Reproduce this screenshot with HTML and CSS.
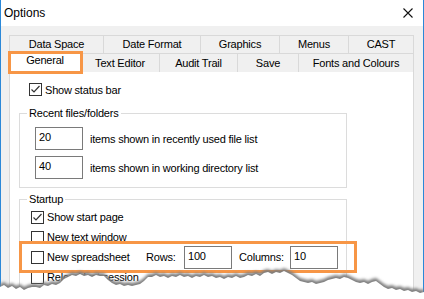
FILE: index.html
```html
<!DOCTYPE html>
<html lang="en">
<head>
    <meta charset="UTF-8">
    <meta name="viewport" content="width=device-width, initial-scale=1.0">
    <title>Options</title>
    <link rel="stylesheet" href="styles.css">
</head>
<body>
    <div class="window">
        <div class="titlebar">
            <span class="title">Options</span>
            <svg class="close" width="10" height="10" viewBox="0 0 10 10">
                <path d="M0.5 0.5L9.5 9.5M9.5 0.5L0.5 9.5" stroke="#111" stroke-width="1.1" fill="none"/>
            </svg>
        </div>
        <div class="dialog">
            <div class="tab-row back">
                <div class="tab">Data Space</div>
                <div class="tab">Date Format</div>
                <div class="tab">Graphics</div>
                <div class="tab">Menus</div>
                <div class="tab">CAST</div>
            </div>
            <div class="tab-row front">
                <div class="tab selected marked">General</div>
                <div class="tab">Text Editor</div>
                <div class="tab">Audit Trail</div>
                <div class="tab">Save</div>
                <div class="tab">Fonts and Colours</div>
            </div>
            <div class="panel">
                <div class="status-row">
                    <span class="box checked"><svg width="11" height="11" viewBox="0 0 11 11"><path d="M1.5 5.5L4 8L9.5 2" stroke="#333" stroke-width="1.2" fill="none"/></svg></span>
                    <span>Show status bar</span>
                </div>

                <fieldset class="group recent">
                    <legend>Recent files/folders</legend>
                    <div class="num-row">
                        <span class="field">20</span>
                        <span>items shown in recently used file list</span>
                    </div>
                    <div class="num-row">
                        <span class="field">40</span>
                        <span>items shown in working directory list</span>
                    </div>
                </fieldset>

                <fieldset class="group startup">
                    <legend>Startup</legend>
                    <div class="check-row">
                        <span class="box checked"><svg width="11" height="11" viewBox="0 0 11 11"><path d="M1.5 5.5L4 8L9.5 2" stroke="#333" stroke-width="1.2" fill="none"/></svg></span>
                        <span>Show start page</span>
                    </div>
                    <div class="check-row">
                        <span class="box"></span>
                        <span>New text window</span>
                    </div>
                    <div class="check-row marked">
                        <div class="check-label">
                            <span class="box"></span>
                            <span>New spreadsheet</span>
                        </div>
                        <span class="rows-label">Rows:</span>
                        <span class="field">100</span>
                        <span class="cols-label">Columns:</span>
                        <span class="field">10</span>
                    </div>
                    <div class="check-row">
                        <span class="box"></span>
                        <span>Reload last session</span>
                    </div>
                </fieldset>
            </div>
        </div>
    </div>

    <svg class="tear" width="424" height="299" viewBox="0 0 424 299">
        <defs>
            <filter id="soft" x="-5%" y="-20%" width="110%" height="140%">
                <feGaussianBlur stdDeviation="1.4"/>
            </filter>
            <path id="edge" d="M0 287 L4 285 L8 288 L12 286 L16 289 L20 287 L24 290 L28 288 L32 287 L36 287 L40 288 L44 285 L48 286 L52 284 L56 285 L60 283 L64 279 L68 277 L72 275 L76 276 L80 274 L84 276 L88 275 L92 277 L96 275 L100 276 L104 276 L108 280 L112 283 L116 285 L120 284 L124 286 L128 285 L132 286 L136 285 L140 284 L144 281 L148 277 L152 277 L156 275 L160 277 L164 276 L168 278 L172 276 L176 277 L180 275 L184 277 L188 276 L192 278 L196 276 L200 277 L204 275 L208 277 L212 276 L216 278 L220 277 L224 279 L228 277 L232 278 L236 276 L240 278 L244 277 L248 275 L252 276 L256 274 L260 276 L264 273 L268 272 L272 274 L276 272 L280 273 L284 271 L288 273 L292 275 L296 278 L300 281 L304 282 L308 283 L312 282 L316 284 L320 283 L324 282 L328 280 L332 279 L336 278 L340 279 L344 277 L348 278 L352 280 L356 282 L360 283 L364 282 L368 284 L372 282 L376 281 L380 284 L384 287 L388 289 L392 288 L396 290 L400 289 L404 291 L408 290 L412 292 L416 291 L420 293 L424 292 L424 299 L0 299 Z"/>
        </defs>
        <use href="#edge" class="tear-shadow" filter="url(#soft)" transform="translate(0,-3)"/>
        <use href="#edge" class="tear-paper"/>
    </svg>
</body>
</html>
```

FILE: styles.css
```css
body {
    margin: 0;
    width: 424px;
    height: 299px;
    overflow: hidden;
    position: relative;
    background: #fff;
    color: #000;
    font-family: "Liberation Sans", Arial, sans-serif;
    font-size: 11px;
    letter-spacing: -0.2px;
}
.window {
    height: 299px;
    overflow: hidden;
    background: #f0f0f0;
    border-left: 1px solid #2b88d8;
    border-right: 1px solid #2b88d8;
}
.titlebar {
    height: 26px;
    background: #fff;
    display: flex;
    align-items: center;
    justify-content: space-between;
    padding: 0 10px 0 3px;
}
.title {
    font-size: 12px;
    letter-spacing: 0;
}
.dialog {
    padding: 9px 0 0 8px;
}
.tab-row {
    display: grid;
    height: 18px;
}
.tab-row.back {
    grid-template-columns: 94px 97px 79px 69px 65px;
}
.tab-row.front {
    grid-template-columns: 71px 79px 78px 61px 115px;
    position: relative;
    z-index: 1;
}
.tab {
    margin-right: -1px;
    border: 1px solid #d9d9d9;
    border-bottom: none;
    background: #f0f0f0;
    display: flex;
    align-items: center;
    justify-content: center;
    padding-bottom: 1px;
}
.tab.selected {
    background: #fff;
    margin-top: -2px;
    height: 21px;
    padding-bottom: 4px;
    box-sizing: border-box;
    position: relative;
}
.marked {
    position: relative;
}
.marked::after {
    content: "";
    position: absolute;
    border: 3px solid #f79646;
    box-sizing: border-box;
    pointer-events: none;
}
.tab.marked::after {
    left: -2px;
    top: -1px;
    width: 75px;
    height: 23px;
}
.panel {
    width: 405px;
    height: 228px;
    overflow: hidden;
    box-sizing: border-box;
    border: 1px solid #d9d9d9;
    background: #fff;
}
.status-row {
    display: flex;
    align-items: center;
    gap: 3px;
    height: 13px;
    padding: 11px 0 0 19px;
}
.box {
    width: 13px;
    height: 13px;
    box-sizing: border-box;
    border: 1px solid #333;
    background: #fff;
    display: inline-flex;
    align-items: center;
    justify-content: center;
    flex: none;
}
.group {
    width: 328px;
    box-sizing: border-box;
    margin: 0 0 0 9px;
    padding: 0;
    border: 1px solid #dcdcdc;
    min-width: 0;
}
.group legend {
    margin-left: 7px;
    padding: 0 2px;
    line-height: 14px;
}
.recent {
    margin-top: 10px;
    padding-bottom: 8px;
}
.startup {
    margin-top: 4px;
    height: 110px;
    padding-top: 1px;
}
.num-row {
    display: flex;
    align-items: center;
    gap: 7px;
    padding-left: 15px;
    margin-top: 6px;
}
.num-row:first-of-type {
    margin-top: 7px;
}
.field {
    width: 48px;
    height: 23px;
    box-sizing: border-box;
    border: 1px solid #7a7a7a;
    background: #fff;
    padding: 3px 0 0 3px;
    flex: none;
}
.check-row {
    display: flex;
    align-items: center;
    gap: 3px;
    height: 20px;
    padding-left: 11px;
}
.check-row.marked {
    gap: 0;
}
.check-row.marked::after {
    left: -1px;
    top: -6px;
    width: 338px;
    height: 32px;
}
.check-label {
    display: flex;
    align-items: center;
    gap: 3px;
    width: 115px;
}
.rows-label {
    width: 38px;
}
.cols-label {
    width: 51px;
    margin-left: 7px;
}
.tear {
    position: absolute;
    left: 0;
    top: 0;
    pointer-events: none;
}
.tear-shadow {
    fill: #7d7d7d;
}
.tear-paper {
    fill: #fff;
}
```
